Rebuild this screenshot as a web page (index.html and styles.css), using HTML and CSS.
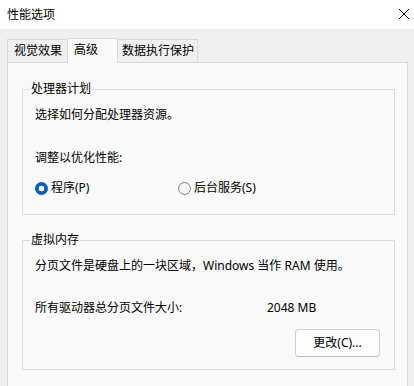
FILE: index.html
```html
<!DOCTYPE html>
<html lang="zh-CN">
<head>
<meta charset="utf-8">
<title>性能选项</title>
<link rel="stylesheet" href="styles.css">
</head>
<body>
<div class="window">
  <div class="titlebar">
    <span class="title">性能选项</span>
    <svg class="close" width="12" height="12" viewBox="0 0 12 12"><path d="M1 1 L11 11 M11 1 L1 11" stroke="#000" stroke-width="1" fill="none"/></svg>
  </div>
  <div class="content">
    <div class="tabs">
      <div class="tab tab-first">视觉效果</div>
      <div class="tab tab-active">高级</div>
      <div class="tab tab-last">数据执行保护</div>
    </div>
    <div class="panel">
      <fieldset class="group group-cpu">
        <legend>处理器计划</legend>
        <div class="line">选择如何分配处理器资源。</div>
        <div class="line label-adjust">调整以优化性能:</div>
        <div class="radios">
          <label class="radio-item radio-first"><span class="radio checked"></span><span>程序(P)</span></label>
          <label class="radio-item"><span class="radio"></span><span>后台服务(S)</span></label>
        </div>
      </fieldset>
      <fieldset class="group group-mem">
        <legend>虚拟内存</legend>
        <div class="line">分页文件是硬盘上的一块区域，Windows 当作 RAM 使用。</div>
        <div class="line size-row"><span class="size-label">所有驱动器总分页文件大小:</span><span>2048 MB</span></div>
        <div class="btn-row"><button class="btn">更改(C)...</button></div>
      </fieldset>
    </div>
  </div>
</div>
</body>
</html>
```
FILE: styles.css
```css
html, body {
  margin: 0;
  padding: 0;
}
body {
  width: 414px;
  height: 386px;
  overflow: hidden;
  background: #f0f0f0;
  font-family: "Noto Sans", "Noto Sans CJK SC", sans-serif;
  font-size: 12px;
  line-height: 16px;
  color: #000;
}
.window {
  width: 414px;
  height: 386px;
}
.titlebar {
  height: 29px;
  background: #ffffff;
  display: flex;
  align-items: center;
  justify-content: space-between;
  padding: 0 4px 0 7px;
}
.title {
  font-size: 12px;
}
.close {
  display: block;
  margin-top: -1px;
}
.content {
  padding: 9px 6px 0 7px;
}
.tabs {
  display: flex;
  align-items: flex-end;
  height: 24px;
}
.tab {
  box-sizing: border-box;
  height: 23px;
  padding: 3px 0 0 6px;
  border-top: 1px solid #d9d9d9;
  background: #f0f0f0;
  white-space: nowrap;
}
.tab-first {
  width: 60px;
  border-left: 1px solid #d9d9d9;
}
.tab-active {
  width: 51px;
  height: 25px;
  margin-bottom: -1px;
  border-left: 1px solid #d9d9d9;
  border-right: 1px solid #d9d9d9;
  background: #f9f9f9;
  position: relative;
  z-index: 1;
}
.tab-last {
  width: 80px;
  padding-left: 4px;
  border-right: 1px solid #d9d9d9;
}
.panel {
  box-sizing: border-box;
  height: 340px;
  background: #f9f9f9;
  border: 1px solid #d9d9d9;
  padding: 18px 12px 0 14px;
}
.group {
  margin: 0;
  border: 1px solid #dcdcdc;
  padding: 10px 14px 18px 12px;
  min-width: 0;
}
.group legend {
  padding: 0 1px;
  margin-left: -5px;
  line-height: 16px;
}
.group-mem {
  margin-top: 17px;
  padding-bottom: 12px;
}
.line {
  height: 16px;
  white-space: nowrap;
}
.label-adjust {
  margin-top: 27px;
}
.radios {
  display: flex;
  margin-top: 14px;
  height: 16px;
  align-items: center;
}
.radio-item {
  display: flex;
  align-items: center;
  gap: 3px;
}
.radio-first {
  width: 143px;
}
.radio {
  box-sizing: border-box;
  width: 13px;
  height: 13px;
  border-radius: 50%;
  border: 1px solid #858585;
  background: #f5f5f5;
}
.radio.checked {
  border: none;
  background: radial-gradient(circle, #ffffff 0 2.6px, #005fb8 3.2px);
}
.size-row {
  margin-top: 26px;
  display: flex;
}
.size-label {
  width: 232px;
}
.btn-row {
  display: flex;
  justify-content: flex-end;
  margin-top: 13px;
}
.btn {
  box-sizing: border-box;
  width: 85px;
  height: 28px;
  font: inherit;
  color: #000;
  background: #fdfdfd;
  border: 1px solid #d0d0d0;
  border-bottom-color: #bcbcbc;
  border-radius: 4px;
  padding: 0;
}
```
